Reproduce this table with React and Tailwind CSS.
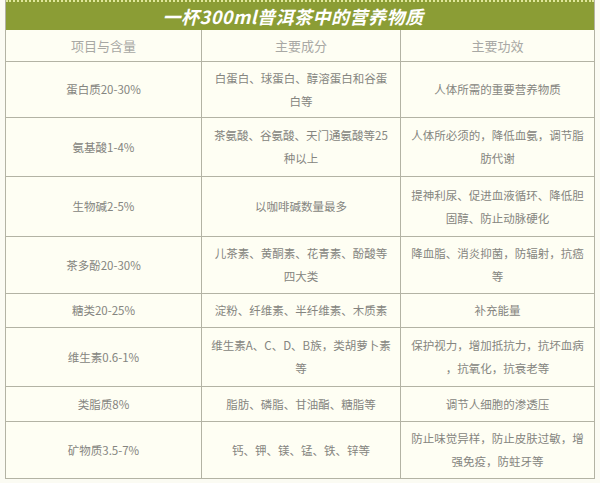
const rows = [
    { h: 'h-[56px]', a: '蛋白质20-30%', b: ['白蛋白、球蛋白、醇溶蛋白和谷蛋', '白等'], c: ['人体所需的重要营养物质'] },
    { h: 'h-[59px]', a: '氨基酸1-4%', b: ['茶氨酸、谷氨酸、天门通氨酸等25', '种以上'], c: ['人体所必须的，降低血氨，调节脂', '肪代谢'] },
    { h: 'h-[60px]', a: '生物碱2-5%', b: ['以咖啡碱数量最多'], c: ['提神利尿、促进血液循环、降低胆', '固醇、防止动脉硬化'] },
    { h: 'h-[57px]', a: '茶多酚20-30%', b: ['儿茶素、黄酮素、花青素、酚酸等', '四大类'], c: ['降血脂、消炎抑菌，防辐射，抗癌', '等'] },
    { h: 'h-[34px]', a: '糖类20-25%', b: ['淀粉、纤维素、半纤维素、木质素'], c: ['补充能量'] },
    { h: 'h-[59px]', a: '维生素0.6-1%', b: ['维生素A、C、D、B族，类胡萝卜素', '等'], c: ['保护视力，增加抵抗力，抗坏血病', '，抗氧化，抗衰老等'] },
    { h: 'h-[35px]', a: '类脂质8%', b: ['脂肪、磷脂、甘油酯、糖脂等'], c: ['调节人细胞的渗透压'] },
    { h: 'h-[56px]', a: '矿物质3.5-7%', b: ['钙、钾、镁、锰、铁、锌等'], c: ['防止味觉异样，防止皮肤过敏，增', '强免疫，防蛀牙等'] },
];

function Cell({ lines, last }) {
    return (
        <div className={`flex flex-col items-center justify-center text-center leading-[23px] ${last ? '' : 'border-r-[1.5px] border-[#b3b3a4]'}`}>
            {lines.map((l, i) => (
                <span key={i} className="whitespace-nowrap">{l}</span>
            ))}
        </div>
    );
}

export default function App() {
    return (
        <div className="w-[600px] h-[483px] bg-[#fbfbf3] pl-[5px] pr-[5px] pt-0" style={{ fontFamily: '"Noto Sans CJK SC", "Noto Sans", sans-serif' }}>
            <div className="w-[590px] bg-[#fefef3] border-l-[1.5px] border-r-[1.5px] border-b-[1.5px] border-[#b3b3a4]">
                <div className="h-[30px] bg-[#8b9d35] border-t-2 border-dotted border-[#dfe79a] flex items-center justify-center">
                    <span className="text-white text-[18px] font-bold italic tracking-[0.5px] -ml-[14px]">一杯300ml普洱茶中的营养物质</span>
                </div>
                <div className="grid grid-cols-[196px_199px_1fr] h-[32px] border-b-[1.5px] border-[#b3b3a4] text-[13px] text-[#a8a8a4]">
                    <Cell lines={['项目与含量']} />
                    <Cell lines={['主要成分']} />
                    <Cell lines={['主要功效']} last />
                </div>
                {rows.map((r, i) => (
                    <div
                        key={i}
                        className={`grid grid-cols-[196px_199px_1fr] ${r.h} text-[11.5px] text-[#858580] ${i < rows.length - 1 ? 'border-b-[1.5px] border-[#b3b3a4]' : ''}`}
                    >
                        <Cell lines={[r.a]} />
                        <Cell lines={r.b} />
                        <Cell lines={r.c} last />
                    </div>
                ))}
            </div>
        </div>
    );
}
